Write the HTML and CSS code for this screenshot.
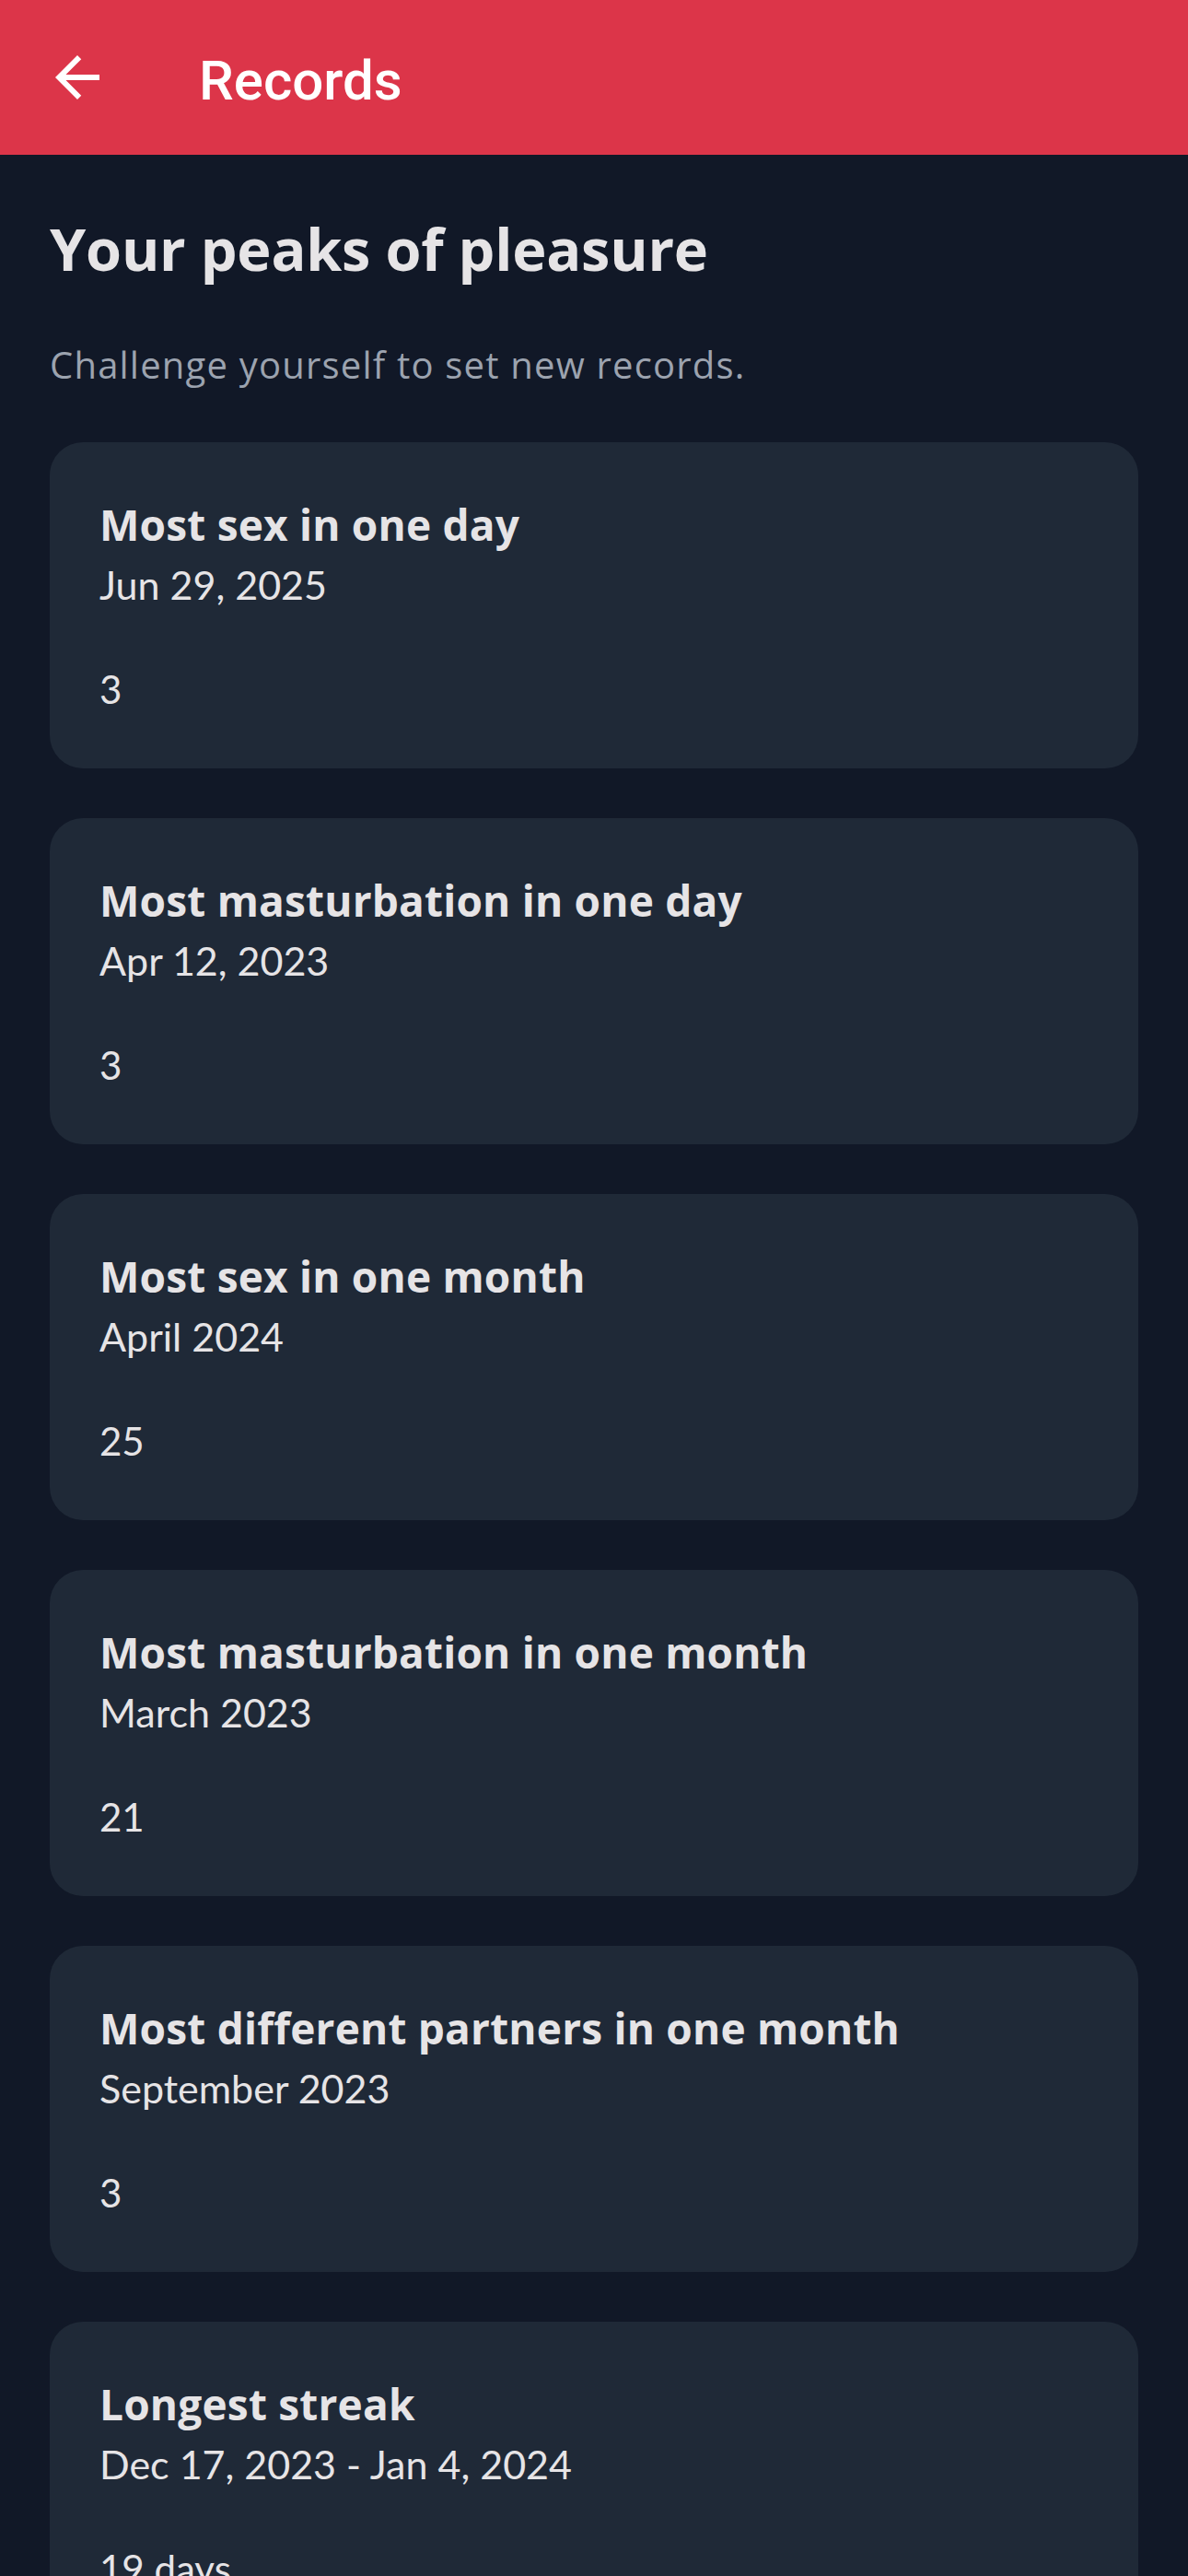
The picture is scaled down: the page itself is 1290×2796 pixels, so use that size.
FILE: index.html
```html
<!DOCTYPE html>
<html lang="en">
<head>
<meta charset="utf-8">
<title>Records</title>
<link rel="stylesheet" href="styles.css">
</head>
<body>
<header class="app-bar">
  <button class="back-btn" aria-label="Back">
    <svg class="back-icon" viewBox="0 0 24 24" width="72" height="72"><path d="M20 11H7.83l5.59-5.59L12 4l-8 8 8 8 1.41-1.41L7.83 13H20v-2z" fill="#ffffff"/></svg>
  </button>
  <h1 class="app-title">Records</h1>
</header>
<main class="content">
  <h2 class="page-title">Your peaks of pleasure</h2>
  <p class="page-subtitle">Challenge yourself to set new records.</p>
  <section class="records">
    <article class="record-card">
      <div class="record-title">Most sex in one day</div>
      <div class="record-date">Jun 29, 2025</div>
      <div class="record-value">3</div>
    </article>
    <article class="record-card">
      <div class="record-title">Most masturbation in one day</div>
      <div class="record-date">Apr 12, 2023</div>
      <div class="record-value">3</div>
    </article>
    <article class="record-card">
      <div class="record-title">Most sex in one month</div>
      <div class="record-date">April 2024</div>
      <div class="record-value">25</div>
    </article>
    <article class="record-card">
      <div class="record-title">Most masturbation in one month</div>
      <div class="record-date">March 2023</div>
      <div class="record-value">21</div>
    </article>
    <article class="record-card">
      <div class="record-title">Most different partners in one month</div>
      <div class="record-date">September 2023</div>
      <div class="record-value">3</div>
    </article>
    <article class="record-card">
      <div class="record-title">Longest streak</div>
      <div class="record-date">Dec 17, 2023 - Jan 4, 2024</div>
      <div class="record-value">19 days</div>
    </article>
  </section>
</main>
</body>
</html>
```
FILE: styles.css
```css
* { box-sizing: border-box; }
html, body { margin: 0; padding: 0; }
body {
  background: #111827;
  font-family: "Lato", "Noto Sans", sans-serif;
  color: #e6e4e6;
  width: 1290px;
  min-height: 2796px;
  overflow: hidden;
}
.app-bar {
  height: 168px;
  background: #dc3549;
  display: flex;
  align-items: center;
}
.back-btn {
  margin-left: 48px;
  width: 72px;
  height: 72px;
  padding: 0;
  border: 0;
  background: none;
  display: flex;
}
.back-icon { display: block; }
.app-title {
  margin: 0 0 0 96px;
  padding-top: 7px;
  font-family: "Roboto", sans-serif;
  font-weight: 500;
  font-size: 60px;
  line-height: 72px;
  color: #ffffff;
}
.content {
  padding: 0 54px;
}
.page-title {
  margin: 62px 0 0;
  font-family: "Open Sans", "Lato", sans-serif;
  font-weight: 700;
  font-size: 63px;
  line-height: 80px;
  letter-spacing: -0.2px;
  color: #e6e4e6;
}
.page-subtitle {
  margin: 58px 0 0;
  font-family: "Open Sans", "Lato", sans-serif;
  font-weight: 400;
  font-size: 40px;
  line-height: 56px;
  letter-spacing: 1.2px;
  color: #9ca3af;
}
.records {
  margin-top: 56px;
  display: flex;
  flex-direction: column;
  gap: 54px;
}
.record-card {
  background: #1f2937;
  border-radius: 36px;
  padding: 57px 54px 54px;
}
.record-title {
  font-family: "Open Sans", "Lato", sans-serif;
  font-weight: 700;
  font-size: 46px;
  line-height: 64px;
  letter-spacing: 0.2px;
}
.record-date {
  margin-top: 2px;
  font-weight: 400;
  font-size: 43px;
  line-height: 64px;
}
.record-value {
  margin-top: 49px;
  font-weight: 400;
  font-size: 42px;
  line-height: 64px;
}
```
